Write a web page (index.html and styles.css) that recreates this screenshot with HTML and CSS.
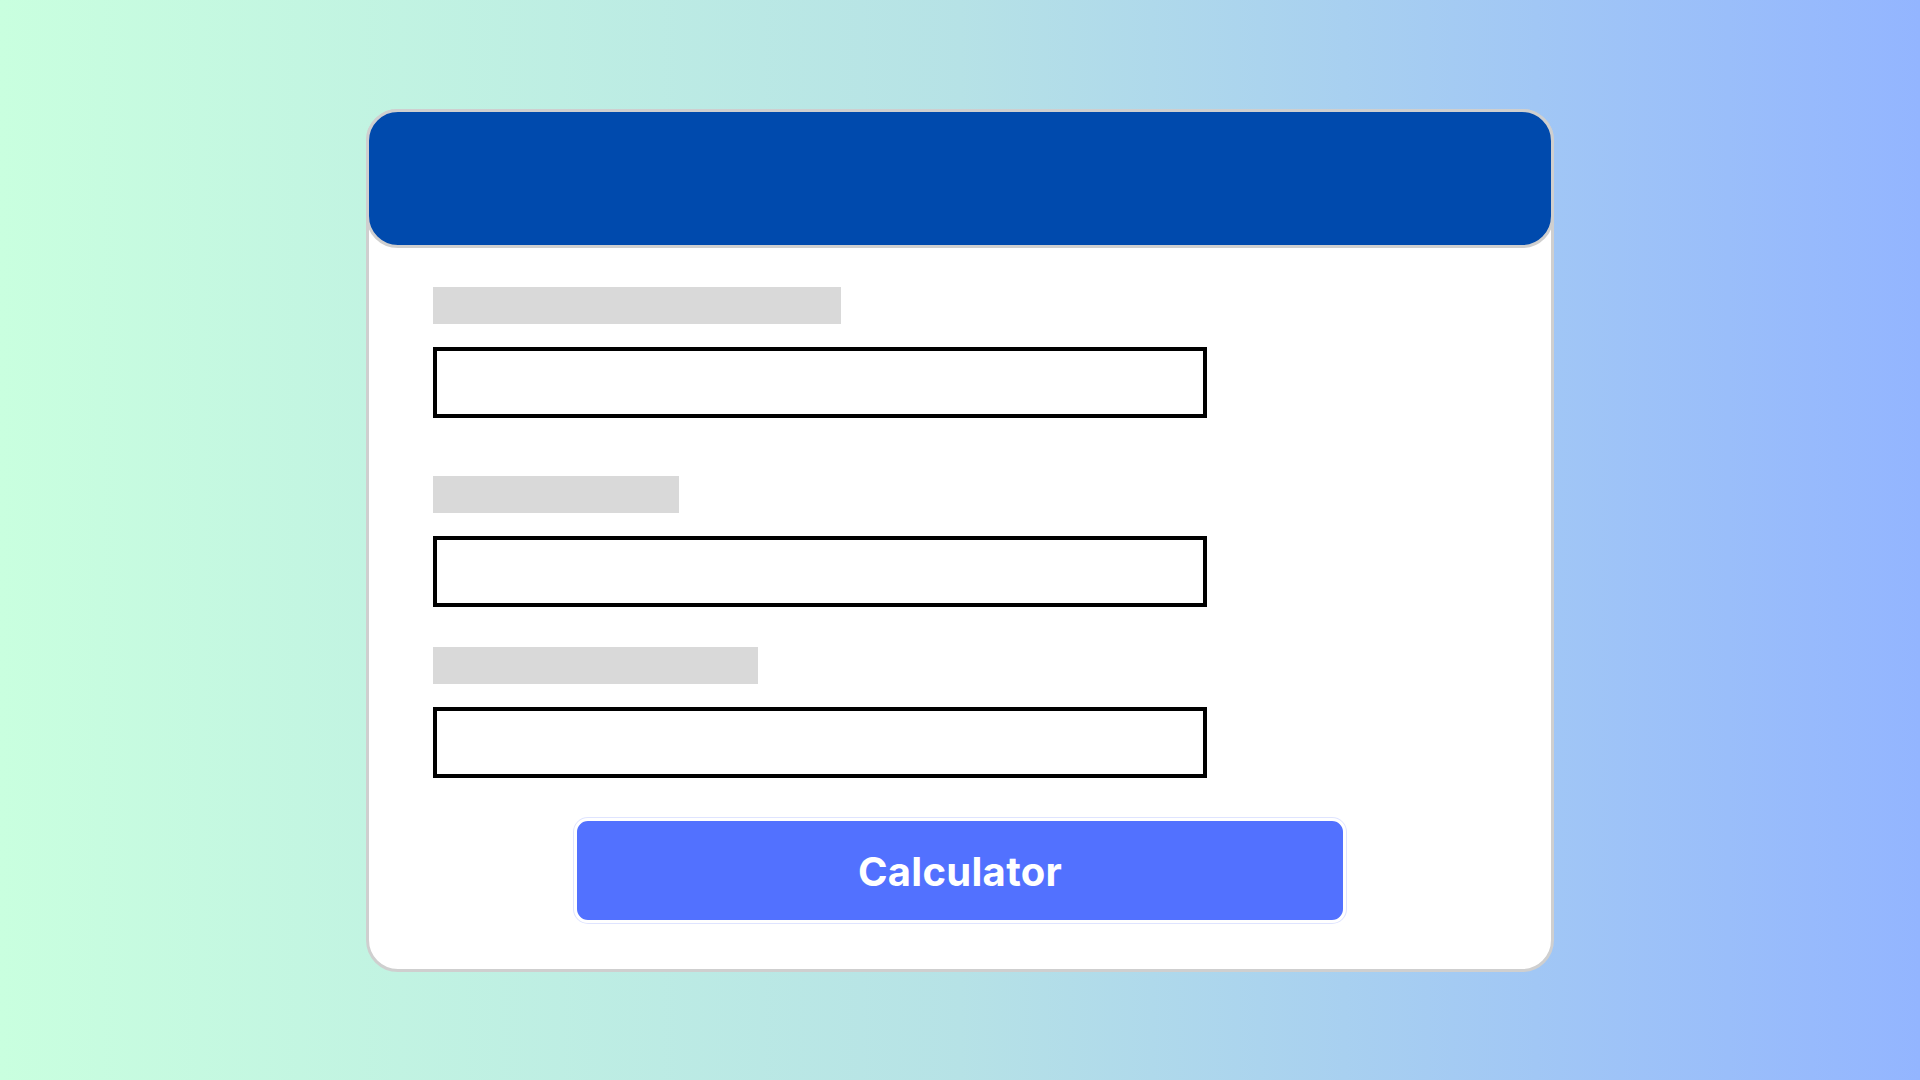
FILE: index.html
```html
<!DOCTYPE html>
<html lang="en">
<head>
<meta charset="utf-8">
<title>Calculator</title>
<link rel="stylesheet" href="styles.css">
</head>
<body>
<main class="card">
  <header class="card-header"></header>
  <section class="form">
    <div class="field field-1">
      <div class="label-bar label-1"></div>
      <div class="input-box"></div>
    </div>
    <div class="field field-2">
      <div class="label-bar label-2"></div>
      <div class="input-box"></div>
    </div>
    <div class="field field-3">
      <div class="label-bar label-3"></div>
      <div class="input-box"></div>
    </div>
    <div class="actions">
      <button class="calc-btn" type="button">Calculator</button>
    </div>
  </section>
</main>
</body>
</html>
```

FILE: styles.css
```css
* { box-sizing: border-box; }
html, body { height: 100%; }
body {
  margin: 0;
  width: 1920px;
  height: 1080px;
  background: linear-gradient(90deg, #c9ffdf 0%, #b6e2e6 50%, #93b5ff 100%);
  display: flex;
  align-items: center;
  justify-content: center;
  font-family: Inter, "Open Sans", "Liberation Sans", sans-serif;
}
.card {
  width: 1188px;
  height: 863px;
  background: #ffffff;
  border: 3px solid #cfcfcf;
  border-radius: 32px;
  display: flex;
  flex-direction: column;
}
.card-header {
  margin: -3px -3px 0;
  height: 139px;
  background: #004aad;
  border: 3px solid #cfcfcf;
  border-radius: 32px;
  flex: none;
}
.form {
  padding: 39px 0 0 64px;
  display: flex;
  flex-direction: column;
}
.field {
  display: flex;
  flex-direction: column;
  gap: 23px;
}
.field-2 { margin-top: 58px; }
.field-3 { margin-top: 40px; }
.label-bar {
  height: 37px;
  background: #d9d9d9;
}
.label-1 { width: 408px; }
.label-2 { width: 246px; }
.label-3 { width: 325px; }
.input-box {
  width: 774px;
  height: 71px;
  border: 4px solid #000000;
  background: #ffffff;
}
.actions {
  margin-top: 40px;
  margin-left: -64px;
  display: flex;
  justify-content: center;
}
.calc-btn {
  width: 772px;
  height: 105px;
  background: #5271ff;
  border: 3px solid #ffffff;
  box-shadow: 0 0 0 1px #dfe4ff;
  border-radius: 14px;
  color: #ffffff;
  font-family: Inter, "Open Sans", "Liberation Sans", sans-serif;
  font-weight: 700;
  font-size: 40px;
  letter-spacing: 0.3px;
  padding: 3px 0 0;
  cursor: pointer;
}
```
